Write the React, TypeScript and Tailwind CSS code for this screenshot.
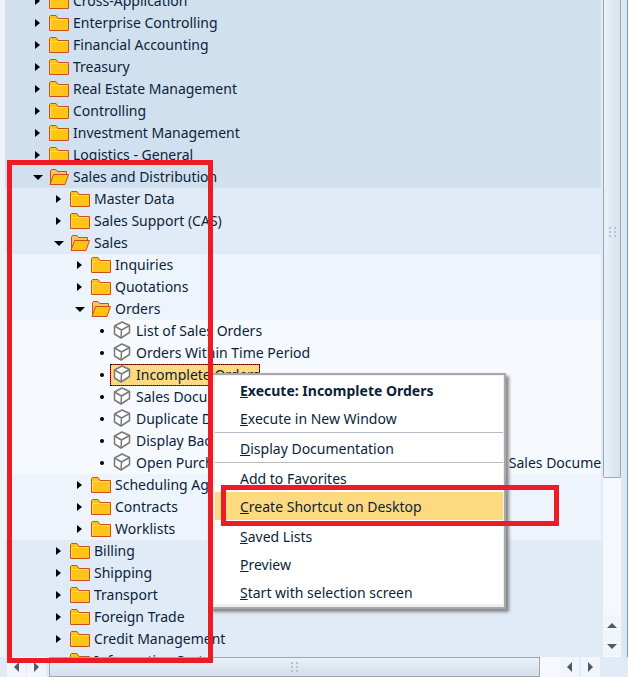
import React from 'react';

type Kind = 'closed' | 'open' | 'leaf';

const Folder = ({ open }: { open: boolean }) =>
  open ? (
    <svg width="20" height="16" viewBox="0 0 20 16" className="shrink-0">
      <path d="M1.5 14.5V2L2.5 .5H7L8.5 2.5H17.5V5" fill="#f7c26a" stroke="#c8501e" />
      <path d="M1 15.5L4.5 5.5H19.5L16 15.5Z" fill="#ffc20e" stroke="#c8501e" />
    </svg>
  ) : (
    <svg width="20" height="16" viewBox="0 0 20 16" className="shrink-0">
      <path d="M.5 15.5V1.5L1.5 .5H7L9 3.5H19.5V15.5Z" fill="#ffc516" stroke="#c8501e" />
      <path d="M1.5 14.5V4.5H18.5" fill="none" stroke="#ffdb6a" />
    </svg>
  );

const Cube = () => (
  <svg width="18" height="18" viewBox="0 0 18 18" className="shrink-0 -mt-[3px]" fill="none" stroke="#7a7a7a" strokeWidth="1.5" strokeLinejoin="round">
    <path d="M9 1L16.5 4.5V11.5L8 17L1.5 13V5Z" fill="#fff" />
    <path d="M1.5 5L8.5 9L16.5 4.5M8.5 9L8 17" />
  </svg>
);

const Marker = ({ kind }: { kind: Kind }) => (
  <div className="w-[11px] h-[11px] flex items-center justify-center shrink-0">
    {kind === 'closed' && <div className="w-0 h-0 border-y-[4px] border-y-transparent border-l-[5px] border-l-black" />}
    {kind === 'open' && <div className="w-0 h-0 border-x-[5px] border-x-transparent border-t-[5px] border-t-black" />}
    {kind === 'leaf' && <div className="w-1 h-1 rounded-full bg-black" />}
  </div>
);

const Row = ({ level, kind, label, open, selected }: { level: number; kind: Kind; label: string; open?: boolean; selected?: boolean }) => {
  const pad = ['pl-[27px]', 'pl-[48px]', 'pl-[69px]', 'pl-[91px]'][level];
  if (kind === 'leaf') {
    return (
      <div className={`h-[22px] flex items-center whitespace-nowrap overflow-hidden ${pad}`}>
        <Marker kind={kind} />
        <div className={`flex items-center gap-[5px] h-[22px] ml-[3px] ${selected ? 'bg-[#fdd97f] border border-[#e0201c] outline-1 outline-dotted outline-black -outline-offset-1 w-[150px] pl-[2px]' : 'pl-[3px]'}`}>
          <Cube />
          <span className="-mt-px text-[14px] text-[#0b1f3a]">{label}</span>
        </div>
      </div>
    );
  }
  return (
    <div className={`h-[22px] flex items-center gap-[6px] whitespace-nowrap overflow-hidden ${pad}`}>
      <Marker kind={kind} />
      <div className="flex items-center gap-[4px]">
        <Folder open={!!open} />
        <span className="-mt-px text-[14px] text-[#0b1f3a]">{label}</span>
      </div>
    </div>
  );
};

const MenuItem = ({ u, rest, bold, hot }: { u: string; rest: string; bold?: boolean; hot?: boolean }) => (
  <div className={`h-[28px] flex items-center pl-[25px] text-[14px] text-[#0b1f3a] ${bold ? 'font-bold' : ''} ${hot ? 'bg-[#fdd97f]' : ''}`}>
    <span className="underline">{u}</span>{rest}
  </div>
);

const Sep = () => <div className="h-[1px] mb-px bg-[#b4bcc6]" />;

const Tri = ({ dir }: { dir: 'up' | 'down' | 'left' | 'right' }) => {
  if (dir === 'up') return <div className="w-0 h-0 border-x-[5px] border-x-transparent border-b-[5px] border-b-[#4a5c70]" />;
  if (dir === 'down') return <div className="w-0 h-0 border-x-[5px] border-x-transparent border-t-[5px] border-t-[#4a5c70]" />;
  if (dir === 'left') return <div className="w-0 h-0 border-y-[5px] border-y-transparent border-r-[5px] border-r-[#4a5c70]" />;
  return <div className="w-0 h-0 border-y-[5px] border-y-transparent border-l-[5px] border-l-[#4a5c70]" />;
};

const Grip = () => (
  <div className="grid grid-cols-2 gap-x-[3px] gap-y-[2px]">
    {[0, 1, 2, 3, 4, 5].map((i) => (
      <div key={i} className="w-[2px] h-[2px] bg-[#b9c4d0]" />
    ))}
  </div>
);

const ScrollBtn = ({ dir, className }: { dir: 'up' | 'down' | 'left' | 'right'; className: string }) => (
  <div className={`flex items-center justify-center bg-[#f2f6fb] ${className}`}>
    <Tri dir={dir} />
  </div>
);

export default function App() {
  return (
    <div className="relative w-[628px] h-[677px] overflow-hidden bg-[#e1ebf7] flex flex-col font-['Noto_Sans','Liberation_Sans',sans-serif]">
      <div className="flex h-[657px]">
        <div className="w-[5px] bg-[#eef3f9]" />

        {/* Tree */}
        <div className="w-[596px] -mt-[10px]">
          <div className="bg-[#d0e0ef]">
            <Row level={0} kind="closed" label="Cross-Application" />
            <Row level={0} kind="closed" label="Enterprise Controlling" />
            <Row level={0} kind="closed" label="Financial Accounting" />
            <Row level={0} kind="closed" label="Treasury" />
            <Row level={0} kind="closed" label="Real Estate Management" />
            <Row level={0} kind="closed" label="Controlling" />
            <Row level={0} kind="closed" label="Investment Management" />
            <Row level={0} kind="closed" label="Logistics - General" />
            <Row level={0} kind="open" open label="Sales and Distribution" />
          </div>
          <div className="bg-[#e1ebf7]">
            <Row level={1} kind="closed" label="Master Data" />
            <Row level={1} kind="closed" label="Sales Support (CAS)" />
            <Row level={1} kind="open" open label="Sales" />
          </div>
          <div className="bg-[#eef4fb]">
            <Row level={2} kind="closed" label="Inquiries" />
            <Row level={2} kind="closed" label="Quotations" />
            <Row level={2} kind="open" open label="Orders" />
          </div>
          <div className="bg-[#f6f9fe]">
            <Row level={3} kind="leaf" label="List of Sales Orders" />
            <Row level={3} kind="leaf" label="Orders Within Time Period" />
            <Row level={3} kind="leaf" selected label="Incomplete Orders" />
            <Row level={3} kind="leaf" label="Sales Documents Blocked for Delivery" />
            <Row level={3} kind="leaf" label="Duplicate Documents" />
            <Row level={3} kind="leaf" label="Display Backorders" />
            <Row level={3} kind="leaf" label="Open Purchase Orders and Contracts Not Yet Cleared by Sales Documents" />
          </div>
          <div className="bg-[#eef4fb]">
            <Row level={2} kind="closed" label="Scheduling Agreements" />
            <Row level={2} kind="closed" label="Contracts" />
            <Row level={2} kind="closed" label="Worklists" />
          </div>
          <div className="bg-[#e1ebf7]">
            <Row level={1} kind="closed" label="Billing" />
            <Row level={1} kind="closed" label="Shipping" />
            <Row level={1} kind="closed" label="Transport" />
            <Row level={1} kind="closed" label="Foreign Trade" />
            <Row level={1} kind="closed" label="Credit Management" />
            <Row level={1} kind="closed" label="Information System" />
          </div>
        </div>

        {/* Vertical scrollbar */}
        <div className="w-[2px] bg-[#e1ebf7]" />
        <div className="w-[18px] flex flex-col bg-[#f5f8fc]">
          <div className="h-[478px] shrink-0 flex items-end justify-center pb-[240px] border-x border-b border-[#a0a6ad] rounded-b-[2px] bg-gradient-to-r from-[#eaf1f8] to-[#d6e2ee]">
            <Grip />
          </div>
          <div className="flex-1" />
          <ScrollBtn dir="up" className="h-[20px] mb-[1px]" />
          <ScrollBtn dir="down" className="h-[20px] mb-[1px]" />
        </div>
        <div className="flex-1 flex">
          <div className="w-[6px] bg-[#dfe8f1]" />
          <div className="flex-1 bg-[#5b9bd0]" />
        </div>
      </div>

      {/* Horizontal scrollbar */}
      <div className="h-[20px] flex">
        <div className="w-[7px]" />
        <ScrollBtn dir="left" className="w-[19px] mr-[1px]" />
        <ScrollBtn dir="right" className="w-[19px] mr-[3px]" />
        <div className="w-[491px] flex items-center justify-center border border-[#a0a6ad] bg-gradient-to-b from-[#eaf1f8] to-[#d3dfeb]">
          <Grip />
        </div>
        <div className="w-[20px] bg-[#f5f8fc]" />
        <ScrollBtn dir="left" className="w-[19px] mr-[2px]" />
        <ScrollBtn dir="right" className="w-[19px]" />
      </div>

      {/* Context menu */}
      <div className="absolute left-[209px] top-[373px] w-[297px] h-[236px] border-2 border-[#a8a8a8] bg-[#f0f0f0] pl-[4px] pr-[1px] pt-[1px] pb-[3px] shadow-[3px_3px_3px_rgba(90,90,90,0.7)]">
        <div className="bg-white h-full">
          <MenuItem bold u="E" rest="xecute: Incomplete Orders" />
          <MenuItem u="E" rest="xecute in New Window" />
          <Sep />
          <MenuItem u="D" rest="isplay Documentation" />
          <Sep />
          <MenuItem u="A" rest="dd to Favorites" />
          <MenuItem hot u="C" rest="reate Shortcut on Desktop" />
          <div className="h-[2px]" />
          <MenuItem u="S" rest="aved Lists" />
          <MenuItem u="P" rest="review" />
          <MenuItem u="S" rest="tart with selection screen" />
        </div>
      </div>

      {/* Annotation boxes */}
      <div className="absolute left-[7px] top-[160px] w-[206px] h-[503px] border-[5px] border-[#ed1c24]" />
      <div className="absolute left-[221px] top-[485px] w-[338px] h-[41px] border-[5px] border-[#ed1c24]" />
    </div>
  );
}
